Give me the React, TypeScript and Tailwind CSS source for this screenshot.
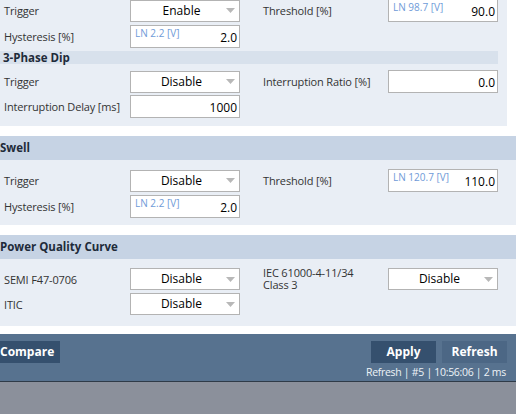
import React from "react";

const fieldBorder = "border border-[#b3b3b3] bg-white";

function Select({ value }: { value: string }) {
  return (
    <div className={`${fieldBorder} flex h-[22px] w-[110px] items-center`}>
      <span className="flex-1 pl-[6px] text-center text-[12px] text-black">{value}</span>
      <svg width="9" height="5" viewBox="0 0 9 5" className="mr-[4px]">
        <path d="M0 0 L9 0 L4.5 5 Z" fill="#b8b8b8" />
      </svg>
    </div>
  );
}

function Field({ value, hint }: { value: string; hint?: string }) {
  return (
    <div className={`${fieldBorder} relative flex h-[23px] w-[110px] items-end justify-end pr-[2px] pb-[1px]`}>
      {hint && (
        <span className="absolute left-[4px] top-[0px] text-[10px] leading-[14px] text-[#6f9bd8]">{hint}</span>
      )}
      <span className="text-[12px] leading-[16px] text-black">{value}</span>
    </div>
  );
}

function Label({ children, right }: { children: React.ReactNode; right?: boolean }) {
  return (
    <div className={`${right ? "pl-[7px]" : "pl-[4px]"} text-[11px] leading-[13px] tracking-[-0.15px] text-[#333]`}>
      {children}
    </div>
  );
}

function Row({
  left,
  leftField,
  right,
  rightField,
  className = "",
}: {
  left: React.ReactNode;
  leftField: React.ReactNode;
  right?: React.ReactNode;
  rightField?: React.ReactNode;
  className?: string;
}) {
  return (
    <div className={`grid grid-cols-[130px_110px_16px_132px_110px] items-center ${className}`}>
      <Label>{left}</Label>
      {leftField}
      <div />
      {right ? <Label right>{right}</Label> : <div />}
      {rightField ?? <div />}
    </div>
  );
}

function Header({ title }: { title: string }) {
  return (
    <div className="flex h-[24px] items-center bg-[#c6d3e4] text-[11.5px] font-bold text-[#1e2b3a]">
      {title}
    </div>
  );
}

export default function App() {
  return (
    <div className="flex h-[414px] w-[516px] flex-col overflow-hidden bg-white font-['Open_Sans','Noto_Sans',sans-serif]">
      {/* dip / interruption panel, scrolled up a little */}
      <div className="flex h-[126px] w-[507px] flex-col bg-[#e9eef5]">
        <Row className="-mt-[1px]" left="Trigger" leftField={<Select value="Enable" />} right="Threshold [%]" rightField={<Field hint="LN 98.7 [V]" value="90.0" />} />
        <Row className="mt-[3px]" left="Hysteresis [%]" leftField={<Field hint="LN 2.2 [V]" value="2.0" />} />
        <div className="mt-[3px] flex h-[13px] w-[498px] items-center bg-[#d8e1ec] pl-[3px] text-[11.5px] font-bold text-[#1e2b3a]">
          3-Phase Dip
        </div>
        <Row className="mt-[6px]" left="Trigger" leftField={<Select value="Disable" />} right="Interruption Ratio [%]" rightField={<Field value="0.0" />} />
        <Row className="mt-[2px]" left="Interruption Delay [ms]" leftField={<Field value="1000" />} />
      </div>

      <div className="mt-[10px]">
        <Header title="Swell" />
        <div className="h-[65px] bg-[#e9eef5] pt-[9px]">
          <Row left="Trigger" leftField={<Select value="Disable" />} right="Threshold [%]" rightField={<Field hint="LN 120.7 [V]" value="110.0" />} />
          <Row className="mt-[3px]" left="Hysteresis [%]" leftField={<Field hint="LN 2.2 [V]" value="2.0" />} />
        </div>
      </div>

      <div className="mt-[10px]">
        <Header title="Power Quality Curve" />
        <div className="h-[67px] bg-[#e9eef5] pt-[9px]">
          <Row
            className="grid-rows-[22px]"
            left="SEMI F47-0706"
            leftField={<Select value="Disable" />}
            right={
              <span className="block leading-[12px]">
                <span className="block">IEC 61000-4-11/34</span>
                <span className="block">Class 3</span>
              </span>
            }
            rightField={<Select value="Disable" />}
          />
          <Row className="mt-[3px]" left="ITIC" leftField={<Select value="Disable" />} />
        </div>
      </div>

      <div className="mt-[8px] flex h-[48px] items-start justify-between border-b border-[#2f3b48] bg-[#57728f] pt-[7px] pr-[9px]">
        <button className="-ml-[6px] h-[22px] bg-[#35506e] px-[6px] text-[12px] font-bold text-white">Compare</button>
        <div className="flex flex-col items-end">
          <div className="flex gap-[6px]">
            <button className="h-[22px] w-[65px] bg-[#35506e] text-[12px] font-bold text-white">Apply</button>
            <button className="h-[22px] w-[65px] bg-[#4c6785] text-[12px] font-bold text-white">Refresh</button>
          </div>
          <div className="mt-[2px] pr-[1px] text-[10.5px] leading-[14px] tracking-[-0.3px] text-[#eef2f7]">
            Refresh | #5 | 10:56:06 | 2 ms
          </div>
        </div>
      </div>
      <div className="flex-1 bg-[#8b909b]" />
    </div>
  );
}
